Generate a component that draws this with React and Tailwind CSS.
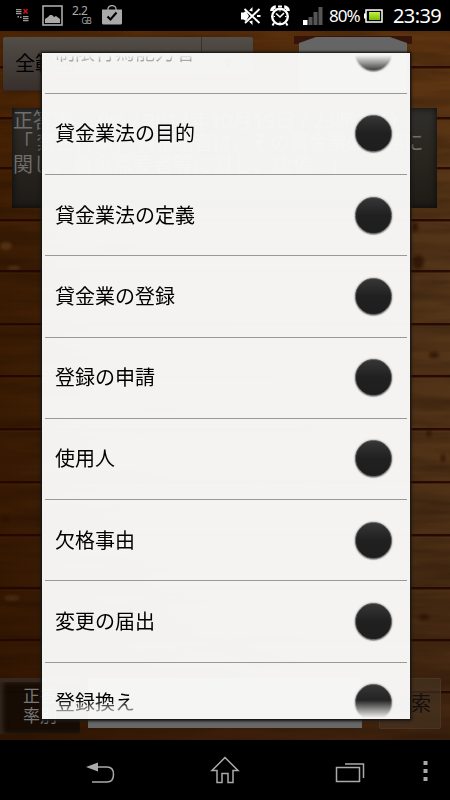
import React from 'react';

const items = [
  '制限行為能力者',
  '貸金業法の目的',
  '貸金業法の定義',
  '貸金業の登録',
  '登録の申請',
  '使用人',
  '欠格事由',
  '変更の届出',
  '登録換え',
];

const seams = [36, 87, 137, 189, 240, 293, 345, 398, 451, 504, 557, 609, 661];

const knots = [
  { x: 6, y: 246, rx: 6, ry: 4, fill: '#5b3a1c' },
  { x: 14, y: 268, rx: 6, ry: 2, fill: '#5b3a1c' },
  { x: 418, y: 262, rx: 6, ry: 7, fill: '#260d02' },
  { x: 415, y: 227, rx: 3, ry: 5, fill: '#260d02' },
  { x: 434, y: 355, rx: 5, ry: 3, fill: '#260d02' },
  { x: 443, y: 458, rx: 2, ry: 4, fill: '#260d02' },
  { x: 429, y: 433, rx: 2, ry: 4, fill: '#260d02' },
  { x: 424, y: 617, rx: 5, ry: 3, fill: '#260d02' },
  { x: 5, y: 519, rx: 4, ry: 3, fill: '#260d02' },
  { x: 12, y: 598, rx: 8, ry: 3, fill: '#4f2e14' },
];

const WoodBackground = () => (
  <svg className="absolute inset-0 h-full w-full" viewBox="0 0 450 709" preserveAspectRatio="none">
    <defs>
      <linearGradient id="wood" x1="0" x2="1" y1="0" y2="0">
        <stop offset="0" stopColor="#3b1c03" />
        <stop offset="0.5" stopColor="#48290f" />
        <stop offset="1" stopColor="#533519" />
      </linearGradient>
      <linearGradient id="woodShade" x1="0" x2="0" y1="0" y2="1">
        <stop offset="0" stopColor="#6b3508" stopOpacity="0.5" />
        <stop offset="0.3" stopColor="#6b3508" stopOpacity="0" />
        <stop offset="0.7" stopColor="#240c00" stopOpacity="0.1" />
        <stop offset="1" stopColor="#240c00" stopOpacity="0.4" />
      </linearGradient>
      <filter id="grain" x="0" y="0" width="100%" height="100%" colorInterpolationFilters="sRGB">
        <feTurbulence type="fractalNoise" baseFrequency="0.01 0.08" numOctaves="3" seed="7" />
        <feColorMatrix values="0 0 0 0 0.08  0 0 0 0 0.03  0 0 0 0 0  2 0 0 0 -0.7" />
      </filter>
      <filter id="soft" x="-50%" y="-100%" width="200%" height="300%">
        <feGaussianBlur stdDeviation="1.8" />
      </filter>
    </defs>
    <rect width="450" height="709" fill="url(#wood)" />
    <rect width="450" height="709" fill="url(#woodShade)" />
    <rect width="450" height="709" filter="url(#grain)" opacity="0.32" />
    {knots.map((k) => (
      <ellipse key={k.y} cx={k.x} cy={k.y - 31} rx={k.rx} ry={k.ry} fill={k.fill} opacity="0.7" filter="url(#soft)" />
    ))}
    {seams.map((y) => (
      <g key={y}>
        <rect y={y - 1} width="450" height="2.5" fill="#210500" opacity="0.85" />
        <rect y={y + 1.5} width="450" height="1" fill="#80532b" opacity="0.15" />
      </g>
    ))}
  </svg>
);

const StatusBar = () => (
  <header className="flex h-[31px] shrink-0 items-center bg-black pl-4 pr-1.5 text-white">
    <svg width="14" height="14" viewBox="0 0 14 14" className="-mt-px">
      <g fill="#999">
        <path d="M0 1h5.500v1.300H0zM0 3h5.500v1.300H0zM0 5h5.500v1.300H0zM7 8h5.500v1.300H7zM7 10h5.500v1.300H7zM7 12h5.500v1.300H7z" />
        <path d="M1.500 8h1.500v1.500H1.500zM4 8.500h1.500V10H4z" />
      </g>
      <path d="M7.500 1l4 4.500M11.500 1l-4 4.500" stroke="#d01111" strokeWidth="1.600" />
    </svg>
    <svg width="21" height="21" viewBox="0 0 21 21" className="ml-3">
      <rect x="1" y="1" width="19" height="19" fill="none" stroke="#aaa" strokeWidth="1.600" />
      <path d="M3 18v-4l3-2 2-2h2l2 2 2-1 4 3v4z" fill="#aaa" />
    </svg>
    <div className="ml-[9px] flex h-[21px] w-[19px] flex-col font-['Noto_Sans',sans-serif] text-[#aaa]">
      <span className="text-[12px] leading-[12px] tracking-[-0.5px]">2.2</span>
      <span className="self-end text-[8px] leading-[7px] tracking-[-0.8px]">GB</span>
    </div>
    <svg width="20" height="20" viewBox="0 0 20 20" className="ml-[11px] -mt-0.5">
      <path d="M6 5.500V4a4 3.500 0 0 1 8 0v1.500" fill="none" stroke="#aaa" strokeWidth="1.300" />
      <path d="M0 4.500h20V18q0 1.500-1.500 1.500h-17Q0 19.500 0 18z" fill="#aaa" />
      <path d="M5.500 11.500l3 3 6-7" fill="none" stroke="#000" strokeWidth="2.200" />
    </svg>
    <svg width="22" height="20" viewBox="0 0 22 20" className="ml-auto">
      <path d="M1 6.500h2.500L6 5l3 5-3 5-2.500-1.500H1z" fill="#fff" />
      <path d="M9 4.500L12.500 1v4.500M9 15.500l3.500 3.500v-4.500" fill="#fff" />
      <path d="M4.500 3L19.500 17M19.500 3L5 17M17 10h3.500" stroke="#fff" strokeWidth="1.900" />
    </svg>
    <svg width="20" height="22" viewBox="0 0 20 22" className="ml-2">
      <g fill="none" stroke="#fff">
        <circle cx="10" cy="11.500" r="7.800" strokeWidth="2.400" />
        <path d="M1.800 6a4 4 0 0 1 4-4M18.200 6a4 4 0 0 0-4-4" strokeWidth="3.400" />
        <path d="M4 18l-1.500 2.500M16 18l1.500 2.500M8 1.500h4" strokeWidth="2" />
        <path d="M6 8.500l4 3.500 4-4" strokeWidth="1.600" />
        <path d="M10 5v1.500M10 16.500V18M3.500 11.500H5M15 11.500h1.500" strokeWidth="1" />
      </g>
    </svg>
    <svg width="20" height="18" viewBox="0 0 20 18" className="ml-[13px]">
      <path d="M0 13h4.500v5H0z" fill="#fff" />
      <path d="M5.500 10h4v8h-4zM10.500 5h4v13h-4zM15.500 0h4v18h-4z" fill="#555" />
    </svg>
    <span className="ml-[6px] w-[32px] whitespace-nowrap font-['Noto_Sans',sans-serif] text-[17px] leading-none tracking-[-1px]">80%</span>
    <svg width="19" height="14" viewBox="0 0 19 14" className="ml-[3px]">
      <defs>
        <linearGradient id="battery" x1="0" x2="0" y1="0" y2="1">
          <stop offset="0" stopColor="#c5ee49" />
          <stop offset="1" stopColor="#78bf00" />
        </linearGradient>
      </defs>
      <rect x="2" y="1" width="16" height="12" fill="none" stroke="#fff" strokeWidth="1.500" />
      <path d="M0 4.500h2v5H0z" fill="#fff" />
      <rect x="5" y="3" width="11" height="8" fill="url(#battery)" />
    </svg>
    <span className="ml-[10px] w-[51px] whitespace-nowrap font-['Noto_Sans',sans-serif] text-[20px] leading-none tracking-[-0.6px]">23:39</span>
  </header>
);

const QuizScreen = () => (
  <div className="relative flex h-full flex-col">
    <div className="flex px-[3px] pt-[6px]">
      <div className="flex h-[54px] w-[250px] items-center justify-between rounded-[2px] border-b border-[#2b2825] bg-linear-to-b from-[#534d48] to-[#37302c] pl-3 text-[20px] text-black shadow">
        <span>全範囲</span>
        <span className="flex h-full w-[52px] items-center justify-center border-l border-[#38322e] text-[10px]">▼</span>
      </div>
      <svg width="118" height="56" viewBox="0 0 118 56" className="-mt-px ml-[41px]">
        <path d="M0 0h118v8H0z" fill="#351509" />
        <path d="M5 7L22 1h74l17 6v45q0 4-4 4H9q-4 0-4-4z" fill="#656565" />
      </svg>
    </div>
    <div className="ml-3 mt-[16px] h-[100px] w-[425px] whitespace-nowrap bg-linear-to-b from-[#302f2d] via-[#29251f] to-[#1d1b17] pl-px pt-[2px] text-[20px] leading-[22px] text-[#6e6e6c] shadow-[inset_0_0_7px_#0b0a09]">
      <p>正答率:　0% / 2013年10月19日 / 23時39分</p>
      <p className="tracking-[-0.9px]">「 禁止行為」 貸金業者は、その貸金業の業務に</p>
      <p>関し、資金需要者等に対し、虚偽...」</p>
    </div>
    <div className="mt-auto flex items-start pb-[6px]">
      <div className="flex h-[56px] w-20 items-center justify-center border-t-4 border-[#35271d] bg-[#120a05]/85 pb-1 text-center text-[17px] leading-[20px] text-[#777] shadow-[inset_3px_0_5px_#35271d]">
        正答<br />率別
      </div>
      <div className="ml-2 h-[50px] w-[274px] bg-[#686868]" />
      <div className="ml-[17px] flex h-[51px] w-[62px] items-center justify-end rounded-[2px] border border-[#483624] bg-[#483624]/60 pr-[9px] text-[20px] text-[#130f0b]">
        検索
      </div>
    </div>
  </div>
);

const RadioDot = () => (
  <span className="h-[37px] w-[37px] shrink-0 rounded-full border border-[#555] bg-linear-to-b from-[#363636] via-[#202020] to-[#1e1e1e] shadow-[0_0_2px_#777,0_1px_1px_#aaa]" />
);

const ChoiceDialog = () => (
  <div className="absolute left-[42px] top-[22px] h-[666px] w-[368px] overflow-hidden bg-[#fafaf9]/97 px-[3px] pt-[2px] shadow-[0_0_2px_1px_#15110d,0_1px_3px_1px_#222]">
    <div className="h-[663px] overflow-hidden mask-[linear-gradient(to_bottom,transparent,black_18px,black_645px,transparent_663px)]">
      <ul className="-mt-[42.500px]">
        {items.map((item) => (
          <li
            key={item}
            className="flex h-[81.25px] items-center justify-between border-b border-[#999] pl-[10px] pr-[15px] text-[20px] text-black"
          >
            <span className="whitespace-nowrap pt-px">{item}</span>
            <RadioDot />
          </li>
        ))}
      </ul>
    </div>
  </div>
);

const NavBar = () => (
  <nav className="flex h-[60px] shrink-0 items-center bg-black">
    <svg width="450" height="60" viewBox="0 0 450 60" fill="none" stroke="#aaa" strokeWidth="1.500">
      <path d="M97 27h10q6.500 0 6.500 7.500t-6.500 7.500H92" />
      <path d="M86 27l12-4.500v9z" fill="#aaa" stroke="none" />
      <path d="M225 17.500l-13 13h5v12h5v-9h6v9h5v-12h5z" />
      <path d="M336.500 27.500h23v14h-23zM345 24h18.500v14" />
      <path d="M423.500 21h4v4h-4zM423.500 29h4v4h-4zM423.500 37h4v4h-4z" fill="#aaa" stroke="none" />
    </svg>
  </nav>
);

const App = () => (
  <div className="flex h-[800px] w-[450px] flex-col overflow-hidden bg-black font-['Open_Sans','Noto_Sans_CJK_JP',sans-serif]" lang="ja">
    <StatusBar />
    <main className="relative min-h-0 flex-1 overflow-hidden">
      <WoodBackground />
      <QuizScreen />
      <ChoiceDialog />
    </main>
    <NavBar />
  </div>
);

export default App;
